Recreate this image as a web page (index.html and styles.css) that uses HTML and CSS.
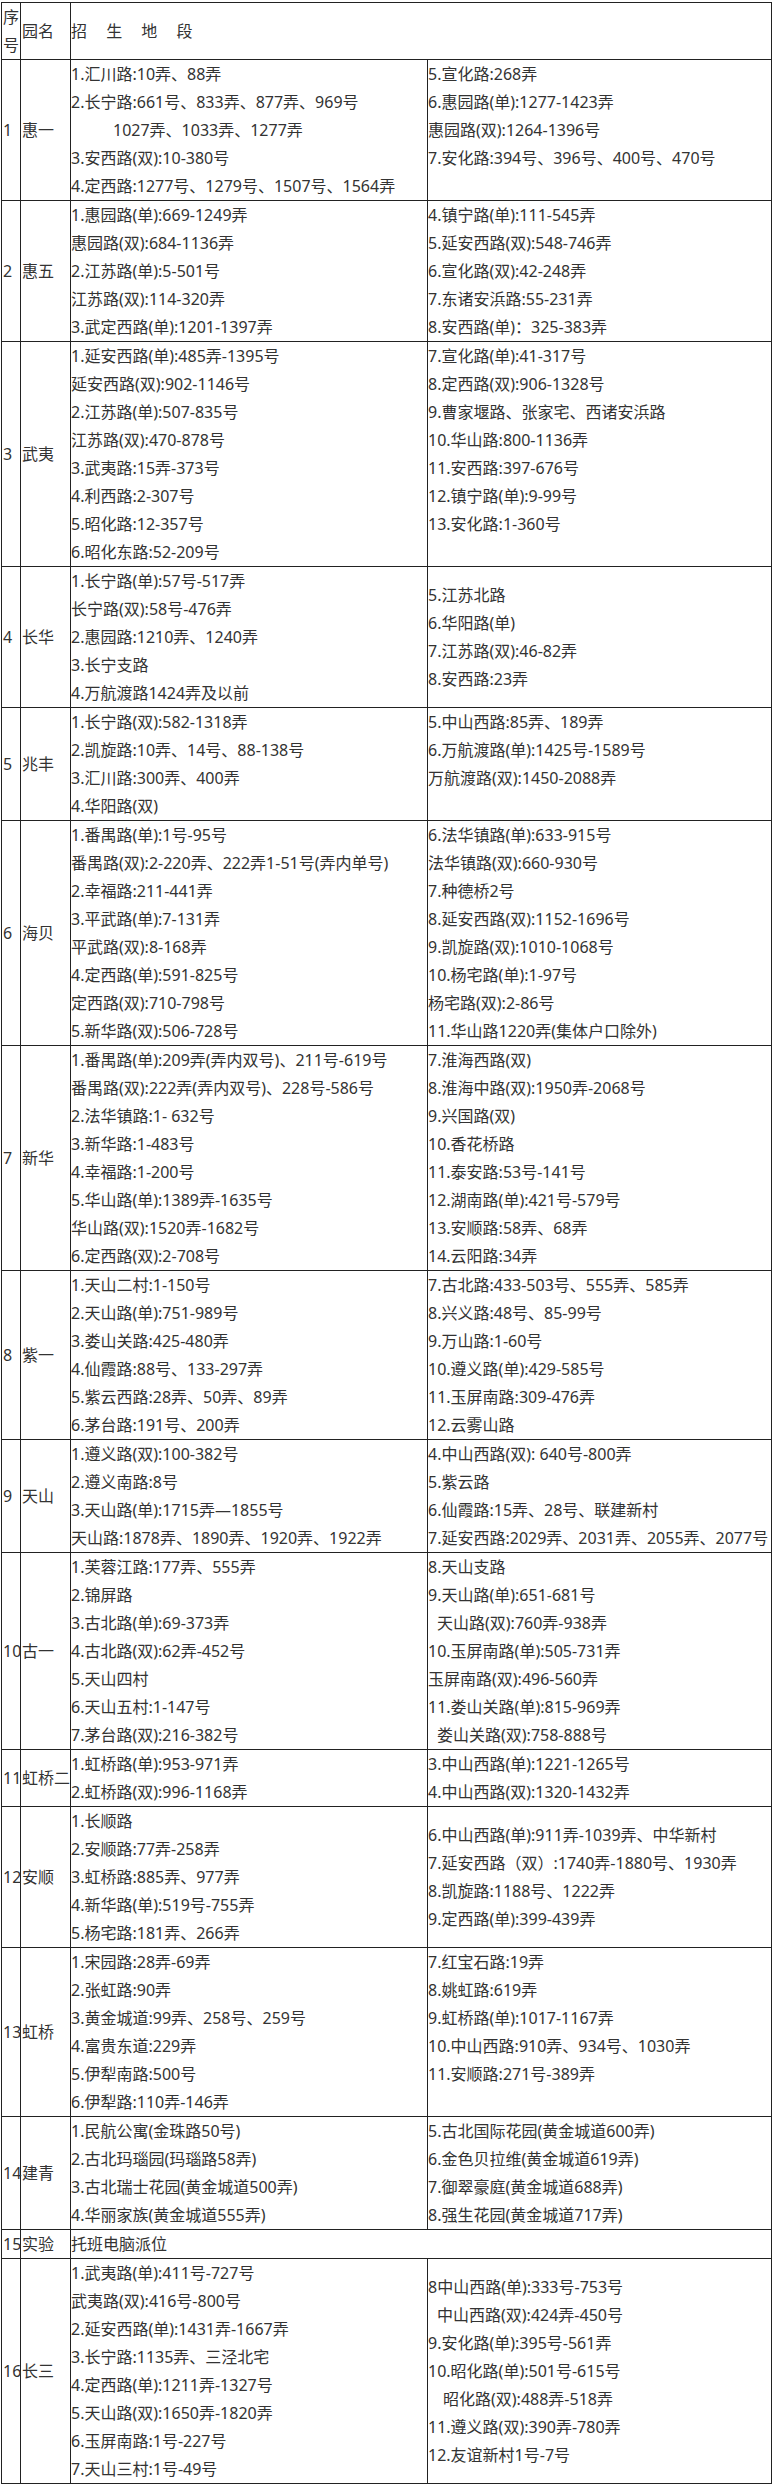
FILE: index.html
```html
<!DOCTYPE html>
<html lang="zh-CN">
<head>
<meta charset="utf-8">
<title>招生地段</title>
<link rel="stylesheet" href="styles.css">
</head>
<body>
<div class="sheet">
  <div class="cell no hd-no">序号</div>
  <div class="cell name">园名</div>
  <div class="cell span2 hd-title">招 生 地 段</div>

  <div class="cell no">1</div>
  <div class="cell name">惠一</div>
  <div class="cell">
    <p>1.汇川路:10弄、88弄</p>
    <p>2.长宁路:661号、833弄、877弄、969号</p>
    <p class="ind3">1027弄、1033弄、1277弄</p>
    <p>3.安西路(双):10-380号</p>
    <p>4.定西路:1277号、1279号、1507号、1564弄</p>
  </div>
  <div class="cell top">
    <p>5.宣化路:268弄</p>
    <p>6.惠园路(单):1277-1423弄</p>
    <p>惠园路(双):1264-1396号</p>
    <p>7.安化路:394号、396号、400号、470号</p>
  </div>

  <div class="cell no">2</div>
  <div class="cell name">惠五</div>
  <div class="cell">
    <p>1.惠园路(单):669-1249弄</p>
    <p>惠园路(双):684-1136弄</p>
    <p>2.江苏路(单):5-501号</p>
    <p>江苏路(双):114-320弄</p>
    <p>3.武定西路(单):1201-1397弄</p>
  </div>
  <div class="cell">
    <p>4.镇宁路(单):111-545弄</p>
    <p>5.延安西路(双):548-746弄</p>
    <p>6.宣化路(双):42-248弄</p>
    <p>7.东诸安浜路:55-231弄</p>
    <p>8.安西路(单)：325-383弄</p>
  </div>

  <div class="cell no">3</div>
  <div class="cell name">武夷</div>
  <div class="cell">
    <p>1.延安西路(单):485弄-1395号</p>
    <p>延安西路(双):902-1146号</p>
    <p>2.江苏路(单):507-835号</p>
    <p>江苏路(双):470-878号</p>
    <p>3.武夷路:15弄-373号</p>
    <p>4.利西路:2-307号</p>
    <p>5.昭化路:12-357号</p>
    <p>6.昭化东路:52-209号</p>
  </div>
  <div class="cell top">
    <p>7.宣化路(单):41-317号</p>
    <p>8.定西路(双):906-1328号</p>
    <p>9.曹家堰路、张家宅、西诸安浜路</p>
    <p>10.华山路:800-1136弄</p>
    <p>11.安西路:397-676号</p>
    <p>12.镇宁路(单):9-99号</p>
    <p>13.安化路:1-360号</p>
  </div>

  <div class="cell no">4</div>
  <div class="cell name">长华</div>
  <div class="cell">
    <p>1.长宁路(单):57号-517弄</p>
    <p>长宁路(双):58号-476弄</p>
    <p>2.惠园路:1210弄、1240弄</p>
    <p>3.长宁支路</p>
    <p>4.万航渡路1424弄及以前</p>
  </div>
  <div class="cell">
    <p>5.江苏北路</p>
    <p>6.华阳路(单)</p>
    <p>7.江苏路(双):46-82弄</p>
    <p>8.安西路:23弄</p>
  </div>

  <div class="cell no">5</div>
  <div class="cell name">兆丰</div>
  <div class="cell">
    <p>1.长宁路(双):582-1318弄</p>
    <p>2.凯旋路:10弄、14号、88-138号</p>
    <p>3.汇川路:300弄、400弄</p>
    <p>4.华阳路(双)</p>
  </div>
  <div class="cell top">
    <p>5.中山西路:85弄、189弄</p>
    <p>6.万航渡路(单):1425号-1589号</p>
    <p>万航渡路(双):1450-2088弄</p>
  </div>

  <div class="cell no">6</div>
  <div class="cell name">海贝</div>
  <div class="cell">
    <p>1.番禺路(单):1号-95号</p>
    <p>番禺路(双):2-220弄、222弄1-51号(弄内单号)</p>
    <p>2.幸福路:211-441弄</p>
    <p>3.平武路(单):7-131弄</p>
    <p>平武路(双):8-168弄</p>
    <p>4.定西路(单):591-825号</p>
    <p>定西路(双):710-798号</p>
    <p>5.新华路(双):506-728号</p>
  </div>
  <div class="cell">
    <p>6.法华镇路(单):633-915号</p>
    <p>法华镇路(双):660-930号</p>
    <p>7.种德桥2号</p>
    <p>8.延安西路(双):1152-1696号</p>
    <p>9.凯旋路(双):1010-1068号</p>
    <p>10.杨宅路(单):1-97号</p>
    <p>杨宅路(双):2-86号</p>
    <p>11.华山路1220弄(集体户口除外)</p>
  </div>

  <div class="cell no">7</div>
  <div class="cell name">新华</div>
  <div class="cell">
    <p>1.番禺路(单):209弄(弄内双号)、211号-619号</p>
    <p>番禺路(双):222弄(弄内双号)、228号-586号</p>
    <p>2.法华镇路:1- 632号</p>
    <p>3.新华路:1-483号</p>
    <p>4.幸福路:1-200号</p>
    <p>5.华山路(单):1389弄-1635号</p>
    <p>华山路(双):1520弄-1682号</p>
    <p>6.定西路(双):2-708号</p>
  </div>
  <div class="cell">
    <p>7.淮海西路(双)</p>
    <p>8.淮海中路(双):1950弄-2068号</p>
    <p>9.兴国路(双)</p>
    <p>10.香花桥路</p>
    <p>11.泰安路:53号-141号</p>
    <p>12.湖南路(单):421号-579号</p>
    <p>13.安顺路:58弄、68弄</p>
    <p>14.云阳路:34弄</p>
  </div>

  <div class="cell no">8</div>
  <div class="cell name">紫一</div>
  <div class="cell">
    <p>1.天山二村:1-150号</p>
    <p>2.天山路(单):751-989号</p>
    <p>3.娄山关路:425-480弄</p>
    <p>4.仙霞路:88号、133-297弄</p>
    <p>5.紫云西路:28弄、50弄、89弄</p>
    <p>6.茅台路:191号、200弄</p>
  </div>
  <div class="cell">
    <p>7.古北路:433-503号、555弄、585弄</p>
    <p>8.兴义路:48号、85-99号</p>
    <p>9.万山路:1-60号</p>
    <p>10.遵义路(单):429-585号</p>
    <p>11.玉屏南路:309-476弄</p>
    <p>12.云雾山路</p>
  </div>

  <div class="cell no">9</div>
  <div class="cell name">天山</div>
  <div class="cell">
    <p>1.遵义路(双):100-382号</p>
    <p>2.遵义南路:8号</p>
    <p>3.天山路(单):1715弄—1855号</p>
    <p>天山路:1878弄、1890弄、1920弄、1922弄</p>
  </div>
  <div class="cell">
    <p>4.中山西路(双): 640号-800弄</p>
    <p>5.紫云路</p>
    <p>6.仙霞路:15弄、28号、联建新村</p>
    <p>7.延安西路:2029弄、2031弄、2055弄、2077号</p>
  </div>

  <div class="cell no">10</div>
  <div class="cell name">古一</div>
  <div class="cell">
    <p>1.芙蓉江路:177弄、555弄</p>
    <p>2.锦屏路</p>
    <p>3.古北路(单):69-373弄</p>
    <p>4.古北路(双):62弄-452号</p>
    <p>5.天山四村</p>
    <p>6.天山五村:1-147号</p>
    <p>7.茅台路(双):216-382号</p>
  </div>
  <div class="cell">
    <p>8.天山支路</p>
    <p>9.天山路(单):651-681号</p>
    <p class="ind1">天山路(双):760弄-938弄</p>
    <p>10.玉屏南路(单):505-731弄</p>
    <p>玉屏南路(双):496-560弄</p>
    <p>11.娄山关路(单):815-969弄</p>
    <p class="ind1">娄山关路(双):758-888号</p>
  </div>

  <div class="cell no">11</div>
  <div class="cell name">虹桥二</div>
  <div class="cell">
    <p>1.虹桥路(单):953-971弄</p>
    <p>2.虹桥路(双):996-1168弄</p>
  </div>
  <div class="cell">
    <p>3.中山西路(单):1221-1265号</p>
    <p>4.中山西路(双):1320-1432弄</p>
  </div>

  <div class="cell no">12</div>
  <div class="cell name">安顺</div>
  <div class="cell">
    <p>1.长顺路</p>
    <p>2.安顺路:77弄-258弄</p>
    <p>3.虹桥路:885弄、977弄</p>
    <p>4.新华路(单):519号-755弄</p>
    <p>5.杨宅路:181弄、266弄</p>
  </div>
  <div class="cell">
    <p>6.中山西路(单):911弄-1039弄、中华新村</p>
    <p>7.延安西路（双）:1740弄-1880号、1930弄</p>
    <p>8.凯旋路:1188号、1222弄</p>
    <p>9.定西路(单):399-439弄</p>
  </div>

  <div class="cell no">13</div>
  <div class="cell name">虹桥</div>
  <div class="cell">
    <p>1.宋园路:28弄-69弄</p>
    <p>2.张虹路:90弄</p>
    <p>3.黄金城道:99弄、258号、259号</p>
    <p>4.富贵东道:229弄</p>
    <p>5.伊犁南路:500号</p>
    <p>6.伊犁路:110弄-146弄</p>
  </div>
  <div class="cell top">
    <p>7.红宝石路:19弄</p>
    <p>8.姚虹路:619弄</p>
    <p>9.虹桥路(单):1017-1167弄</p>
    <p>10.中山西路:910弄、934号、1030弄</p>
    <p>11.安顺路:271号-389弄</p>
  </div>

  <div class="cell no">14</div>
  <div class="cell name">建青</div>
  <div class="cell">
    <p>1.民航公寓(金珠路50号)</p>
    <p>2.古北玛瑙园(玛瑙路58弄)</p>
    <p>3.古北瑞士花园(黄金城道500弄)</p>
    <p>4.华丽家族(黄金城道555弄)</p>
  </div>
  <div class="cell">
    <p>5.古北国际花园(黄金城道600弄)</p>
    <p>6.金色贝拉维(黄金城道619弄)</p>
    <p>7.御翠豪庭(黄金城道688弄)</p>
    <p>8.强生花园(黄金城道717弄)</p>
  </div>

  <div class="cell no">15</div>
  <div class="cell name">实验</div>
  <div class="cell span2">
    <p>托班电脑派位</p>
  </div>

  <div class="cell no">16</div>
  <div class="cell name">长三</div>
  <div class="cell">
    <p>1.武夷路(单):411号-727号</p>
    <p>武夷路(双):416号-800号</p>
    <p>2.延安西路(单):1431弄-1667弄</p>
    <p>3.长宁路:1135弄、三泾北宅</p>
    <p>4.定西路(单):1211弄-1327号</p>
    <p>5.天山路(双):1650弄-1820弄</p>
    <p>6.玉屏南路:1号-227号</p>
    <p>7.天山三村:1号-49号</p>
  </div>
  <div class="cell">
    <p>8中山西路(单):333号-753号</p>
    <p class="ind1">中山西路(双):424弄-450号</p>
    <p>9.安化路(单):395号-561弄</p>
    <p>10.昭化路(单):501号-615号</p>
    <p class="ind2">昭化路(双):488弄-518弄</p>
    <p>11.遵义路(双):390弄-780弄</p>
    <p>12.友谊新村1号-7号</p>
  </div>
</div>
</body>
</html>
```

FILE: styles.css
```css
html, body {
  margin: 0;
  padding: 0;
  background: #ffffff;
}

body {
  color: #333333;
  font-family: "Noto Sans", "Noto Sans CJK SC", sans-serif;
  font-size: 16px;
  line-height: 28px;
}

.sheet {
  display: grid;
  grid-template-columns: 19px 50px 357px 344px;
  width: 770px;
  margin: 2px 0 0 1px;
  border-top: 1px solid #222222;
  border-left: 1px solid #222222;
}

.cell {
  box-sizing: border-box;
  border-right: 1px solid #222222;
  border-bottom: 1px solid #222222;
  display: flex;
  flex-direction: column;
  justify-content: center;
  white-space: nowrap;
  min-width: 0;
}

.cell p {
  margin: 0;
  height: 28px;
}

.top {
  justify-content: flex-start;
}

.span2 {
  grid-column: span 2;
}

.no {
  padding-left: 1px;
}

.name {
  padding-left: 1px;
}

.hd-no {
  white-space: normal;
  word-break: break-all;
}

.hd-title {
  word-spacing: 15px;
}

.ind1 {
  padding-left: 9px;
}

.ind2 {
  padding-left: 15px;
}

.ind3 {
  padding-left: 42px;
}
```
